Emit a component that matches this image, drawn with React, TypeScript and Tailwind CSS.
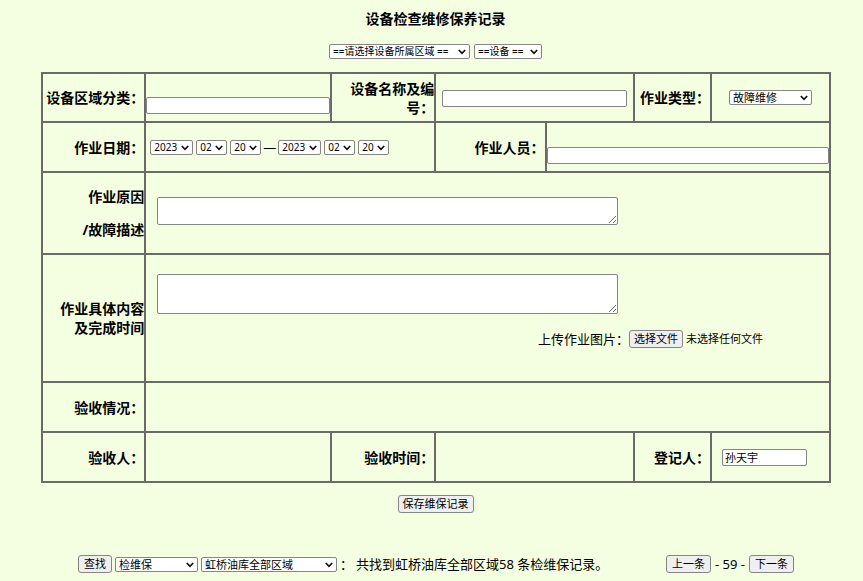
import { useState } from "react";
import type { ReactNode } from "react";

const label = "border-2 border-[#6a6a68] text-right text-sm leading-[19px] font-bold";
const cell = "border-2 border-[#6a6a68]";
const control = "border border-[#858585] rounded-xs bg-white";
const button =
  "h-[18px] shrink-0 rounded-[3px] border border-[#858585] bg-[#efefef] px-1 text-[11px] leading-4 whitespace-nowrap";

interface PickerProps {
  name: string;
  width: string;
  options: string[];
  text?: string;
}

function Picker({ name, width, options, text = "text-[11px]" }: PickerProps) {
  const [value, setValue] = useState(options[0]);
  return (
    <span className={`relative inline-flex h-[15px] shrink-0 ${width}`}>
      <select
        aria-label={name}
        value={value}
        onChange={(e) => setValue(e.target.value)}
        className={`${control} ${text} h-[15px] w-full appearance-none pl-[3px] leading-[13px]`}
      >
        {options.map((o) => (
          <option key={o}>{o}</option>
        ))}
      </select>
      <svg
        viewBox="0 0 8 6"
        className="pointer-events-none absolute top-[5px] right-1 h-[6px] w-2"
        fill="none"
        stroke="#111"
        strokeWidth="1.7"
      >
        <path d="M0.8 1 L4 4.3 L7.2 1" />
      </svg>
    </span>
  );
}

function DatePicker({ name }: { name: string }) {
  return (
    <span className="flex gap-[3px]">
      <Picker name={`${name}年`} width="w-[43px]" text="text-[10px]" options={["2023", "2022"]} />
      <Picker name={`${name}月`} width="w-[31px]" text="text-[10px]" options={["02", "01"]} />
      <Picker name={`${name}日`} width="w-[31px]" text="text-[10px]" options={["20", "19"]} />
    </span>
  );
}

function Label({ htmlFor, children }: { htmlFor?: string; children: ReactNode }) {
  return (
    <th scope="row" className={label}>
      <label htmlFor={htmlFor}>{children}</label>
    </th>
  );
}

export default function App() {
  return (
    <main className="min-h-screen bg-[#f4ffe1] pt-[9px] font-['Noto_Sans','Noto_Sans_CJK_SC',sans-serif] text-black">
      <h1 className="pl-2 text-center text-sm leading-5 font-bold">设备检查维修保养记录</h1>
      <div className="mt-[15px] flex justify-center gap-1 pl-2">
        <Picker name="设备所属区域" width="w-[141px]" text="text-[10px]" options={["==请选择设备所属区域 =="]} />
        <Picker name="设备" width="w-[68px]" text="text-[10px]" options={["==设备 =="]} />
      </div>

      <div className="mt-[13px] pr-8 pl-[41px]">
        <table className="w-full table-fixed border-collapse">
          <colgroup>
            <col className="w-[13.1%]" />
            <col className="w-[23.6%]" />
            <col className="w-[13.2%]" />
            <col className="w-[14%]" />
            <col className="w-[11.2%]" />
            <col className="w-[9.8%]" />
            <col />
          </colgroup>
          <tbody>
            <tr className="h-[49px]">
              <Label htmlFor="area">设备区域分类：</Label>
              <td className={`${cell} align-bottom`}>
                <input id="area" className={`${control} mb-[7px] block h-[17px] w-full px-[2px] text-[11px]`} />
              </td>
              <Label htmlFor="device">设备名称及编号：</Label>
              <td colSpan={2} className={`${cell} px-[6px] pt-[2px]`}>
                <input id="device" className={`${control} block h-[17px] w-full px-[2px] text-[11px]`} />
              </td>
              <Label>作业类型：</Label>
              <td className={cell}>
                <div className="flex justify-center">
                  <Picker name="作业类型" width="w-[83px]" options={["故障维修", "检查保养"]} />
                </div>
              </td>
            </tr>
            <tr className="h-[50px]">
              <Label>作业日期：</Label>
              <td colSpan={2} className={cell}>
                <div className="flex items-center pl-1 text-[13px] leading-[15px]">
                  <DatePicker name="开始" />
                  <span className="w-[17px] text-center">—</span>
                  <DatePicker name="结束" />
                </div>
              </td>
              <Label htmlFor="staff">作业人员：</Label>
              <td colSpan={3} className={`${cell} align-bottom`}>
                <input id="staff" className={`${control} mb-[7px] block h-[17px] w-full px-[2px] text-[11px]`} />
              </td>
            </tr>
            <tr className="h-[82px]">
              <Label htmlFor="reason">
                作业原因
                <br />
                <span className="mt-[14px] inline-block">/故障描述</span>
              </Label>
              <td colSpan={6} className={`${cell} pb-1 pl-[11px]`}>
                <textarea id="reason" className={`${control} block h-7 w-[461px] px-[2px] text-[11px]`} />
              </td>
            </tr>
            <tr className="h-[128px]">
              <Label htmlFor="detail">
                作业具体内容
                <br />
                及完成时间
              </Label>
              <td colSpan={6} className={`${cell} pt-[19px] align-top`}>
                <textarea id="detail" className={`${control} ml-[11px] block h-10 w-[461px] px-[2px] text-[11px]`} />
                <div className="mt-4 flex items-center justify-end pr-[66px]">
                  <label htmlFor="photo" className="text-[13px] leading-[18px] whitespace-nowrap">
                    上传作业图片：
                  </label>
                  <input id="photo" type="file" className="hidden" />
                  <button
                    type="button"
                    className={button}
                    onClick={() => document.getElementById("photo")?.click()}
                  >
                    选择文件
                  </button>
                  <span className="ml-[3px] text-[11px] leading-[18px]">未选择任何文件</span>
                </div>
              </td>
            </tr>
            <tr className="h-[50px]">
              <Label>验收情况：</Label>
              <td colSpan={6} className={cell} />
            </tr>
            <tr className="h-[50px]">
              <Label>验收人：</Label>
              <td className={cell} />
              <Label>验收时间：</Label>
              <td colSpan={2} className={cell} />
              <Label htmlFor="recorder">登记人：</Label>
              <td className={`${cell} pl-[10px]`}>
                <input
                  id="recorder"
                  defaultValue="孙天宇"
                  className={`${control} block h-[17px] w-[85px] px-[2px] text-[11px]`}
                />
              </td>
            </tr>
          </tbody>
        </table>
      </div>

      <div className="mt-3 flex justify-center pl-2">
        <button type="button" className={button}>
          保存维保记录
        </button>
      </div>

      <div className="mt-[42px] flex items-center justify-between pr-[69px] pl-[78px] text-[13px] leading-[18px]">
        <div className="flex items-center gap-[3px]">
          <button type="button" className={`${button} w-[34px]`}>
            查找
          </button>
          <Picker name="记录类型" width="w-[83px]" options={["检维保"]} />
          <Picker name="查询区域" width="w-[136px]" options={["虹桥油库全部区域"]} />
          <span className="whitespace-nowrap">：</span>
          <span className="whitespace-nowrap">共找到虹桥油库全部区域58 条检维保记录。</span>
        </div>
        <div className="flex items-center gap-1">
          <button type="button" className={`${button} w-[45px]`}>
            上一条
          </button>
          <span className="whitespace-nowrap">- 59 -</span>
          <button type="button" className={`${button} w-[45px]`}>
            下一条
          </button>
        </div>
      </div>
    </main>
  );
}
